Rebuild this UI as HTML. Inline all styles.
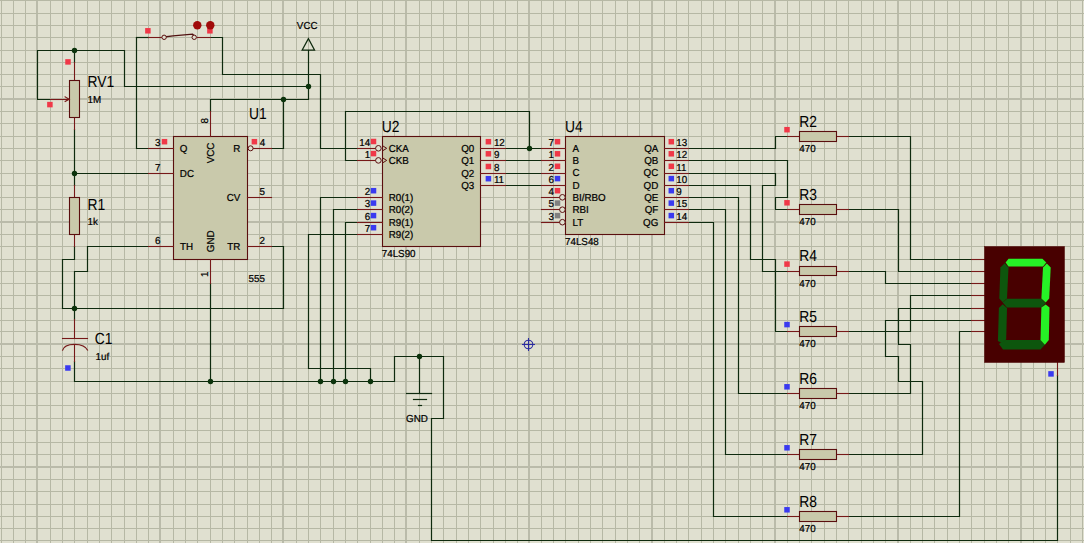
<!DOCTYPE html>
<html><head><meta charset="utf-8"><style>
html,body{margin:0;padding:0;background:#e0e0d0;overflow:hidden}
svg{display:block}
text{font-family:"Liberation Sans",sans-serif;fill:#000000;text-rendering:geometricPrecision;stroke:#000000;stroke-width:0.22px}
text.big{stroke-width:0.05px}
</style></head><body>
<svg width="1084" height="543" viewBox="0 0 1084 543">
<rect width="1084" height="543" fill="#e0e0d0"/>
<rect x="1" y="0" width="1" height="543" fill="#b6b8a5"/>
<rect x="13" y="0" width="1" height="543" fill="#b6b8a5"/>
<rect x="25" y="0" width="1" height="543" fill="#b6b8a5"/>
<rect x="50" y="0" width="1" height="543" fill="#b6b8a5"/>
<rect x="62" y="0" width="1" height="543" fill="#b6b8a5"/>
<rect x="74" y="0" width="1" height="543" fill="#b6b8a5"/>
<rect x="87" y="0" width="1" height="543" fill="#b6b8a5"/>
<rect x="99" y="0" width="1" height="543" fill="#b6b8a5"/>
<rect x="111" y="0" width="1" height="543" fill="#b6b8a5"/>
<rect x="124" y="0" width="1" height="543" fill="#b6b8a5"/>
<rect x="136" y="0" width="1" height="543" fill="#b6b8a5"/>
<rect x="148" y="0" width="1" height="543" fill="#b6b8a5"/>
<rect x="173" y="0" width="1" height="543" fill="#b6b8a5"/>
<rect x="185" y="0" width="1" height="543" fill="#b6b8a5"/>
<rect x="197" y="0" width="1" height="543" fill="#b6b8a5"/>
<rect x="210" y="0" width="1" height="543" fill="#b6b8a5"/>
<rect x="222" y="0" width="1" height="543" fill="#b6b8a5"/>
<rect x="234" y="0" width="1" height="543" fill="#b6b8a5"/>
<rect x="247" y="0" width="1" height="543" fill="#b6b8a5"/>
<rect x="259" y="0" width="1" height="543" fill="#b6b8a5"/>
<rect x="271" y="0" width="1" height="543" fill="#b6b8a5"/>
<rect x="296" y="0" width="1" height="543" fill="#b6b8a5"/>
<rect x="308" y="0" width="1" height="543" fill="#b6b8a5"/>
<rect x="320" y="0" width="1" height="543" fill="#b6b8a5"/>
<rect x="333" y="0" width="1" height="543" fill="#b6b8a5"/>
<rect x="345" y="0" width="1" height="543" fill="#b6b8a5"/>
<rect x="357" y="0" width="1" height="543" fill="#b6b8a5"/>
<rect x="370" y="0" width="1" height="543" fill="#b6b8a5"/>
<rect x="382" y="0" width="1" height="543" fill="#b6b8a5"/>
<rect x="394" y="0" width="1" height="543" fill="#b6b8a5"/>
<rect x="419" y="0" width="1" height="543" fill="#b6b8a5"/>
<rect x="431" y="0" width="1" height="543" fill="#b6b8a5"/>
<rect x="443" y="0" width="1" height="543" fill="#b6b8a5"/>
<rect x="456" y="0" width="1" height="543" fill="#b6b8a5"/>
<rect x="468" y="0" width="1" height="543" fill="#b6b8a5"/>
<rect x="480" y="0" width="1" height="543" fill="#b6b8a5"/>
<rect x="493" y="0" width="1" height="543" fill="#b6b8a5"/>
<rect x="505" y="0" width="1" height="543" fill="#b6b8a5"/>
<rect x="517" y="0" width="1" height="543" fill="#b6b8a5"/>
<rect x="541" y="0" width="1" height="543" fill="#b6b8a5"/>
<rect x="553" y="0" width="1" height="543" fill="#b6b8a5"/>
<rect x="565" y="0" width="1" height="543" fill="#b6b8a5"/>
<rect x="578" y="0" width="1" height="543" fill="#b6b8a5"/>
<rect x="590" y="0" width="1" height="543" fill="#b6b8a5"/>
<rect x="602" y="0" width="1" height="543" fill="#b6b8a5"/>
<rect x="615" y="0" width="1" height="543" fill="#b6b8a5"/>
<rect x="627" y="0" width="1" height="543" fill="#b6b8a5"/>
<rect x="639" y="0" width="1" height="543" fill="#b6b8a5"/>
<rect x="664" y="0" width="1" height="543" fill="#b6b8a5"/>
<rect x="676" y="0" width="1" height="543" fill="#b6b8a5"/>
<rect x="688" y="0" width="1" height="543" fill="#b6b8a5"/>
<rect x="701" y="0" width="1" height="543" fill="#b6b8a5"/>
<rect x="713" y="0" width="1" height="543" fill="#b6b8a5"/>
<rect x="725" y="0" width="1" height="543" fill="#b6b8a5"/>
<rect x="738" y="0" width="1" height="543" fill="#b6b8a5"/>
<rect x="750" y="0" width="1" height="543" fill="#b6b8a5"/>
<rect x="762" y="0" width="1" height="543" fill="#b6b8a5"/>
<rect x="787" y="0" width="1" height="543" fill="#b6b8a5"/>
<rect x="799" y="0" width="1" height="543" fill="#b6b8a5"/>
<rect x="811" y="0" width="1" height="543" fill="#b6b8a5"/>
<rect x="824" y="0" width="1" height="543" fill="#b6b8a5"/>
<rect x="836" y="0" width="1" height="543" fill="#b6b8a5"/>
<rect x="848" y="0" width="1" height="543" fill="#b6b8a5"/>
<rect x="861" y="0" width="1" height="543" fill="#b6b8a5"/>
<rect x="873" y="0" width="1" height="543" fill="#b6b8a5"/>
<rect x="885" y="0" width="1" height="543" fill="#b6b8a5"/>
<rect x="910" y="0" width="1" height="543" fill="#b6b8a5"/>
<rect x="922" y="0" width="1" height="543" fill="#b6b8a5"/>
<rect x="934" y="0" width="1" height="543" fill="#b6b8a5"/>
<rect x="947" y="0" width="1" height="543" fill="#b6b8a5"/>
<rect x="959" y="0" width="1" height="543" fill="#b6b8a5"/>
<rect x="971" y="0" width="1" height="543" fill="#b6b8a5"/>
<rect x="984" y="0" width="1" height="543" fill="#b6b8a5"/>
<rect x="996" y="0" width="1" height="543" fill="#b6b8a5"/>
<rect x="1008" y="0" width="1" height="543" fill="#b6b8a5"/>
<rect x="1033" y="0" width="1" height="543" fill="#b6b8a5"/>
<rect x="1045" y="0" width="1" height="543" fill="#b6b8a5"/>
<rect x="1057" y="0" width="1" height="543" fill="#b6b8a5"/>
<rect x="1070" y="0" width="1" height="543" fill="#b6b8a5"/>
<rect x="1082" y="0" width="1" height="543" fill="#b6b8a5"/>
<rect x="36" y="0" width="2" height="543" fill="#babbaa"/>
<rect x="159" y="0" width="2" height="543" fill="#babbaa"/>
<rect x="282" y="0" width="2" height="543" fill="#babbaa"/>
<rect x="405" y="0" width="2" height="543" fill="#babbaa"/>
<rect x="528" y="0" width="2" height="543" fill="#babbaa"/>
<rect x="651" y="0" width="2" height="543" fill="#babbaa"/>
<rect x="774" y="0" width="2" height="543" fill="#babbaa"/>
<rect x="897" y="0" width="2" height="543" fill="#babbaa"/>
<rect x="1020" y="0" width="2" height="543" fill="#babbaa"/>
<rect x="0" y="0" width="1084" height="1" fill="#b6b8a5"/>
<rect x="0" y="13" width="1084" height="1" fill="#b6b8a5"/>
<rect x="0" y="25" width="1084" height="1" fill="#b6b8a5"/>
<rect x="0" y="37" width="1084" height="1" fill="#b6b8a5"/>
<rect x="0" y="50" width="1084" height="1" fill="#b6b8a5"/>
<rect x="0" y="62" width="1084" height="1" fill="#b6b8a5"/>
<rect x="0" y="74" width="1084" height="1" fill="#b6b8a5"/>
<rect x="0" y="86" width="1084" height="1" fill="#b6b8a5"/>
<rect x="0" y="111" width="1084" height="1" fill="#b6b8a5"/>
<rect x="0" y="123" width="1084" height="1" fill="#b6b8a5"/>
<rect x="0" y="136" width="1084" height="1" fill="#b6b8a5"/>
<rect x="0" y="148" width="1084" height="1" fill="#b6b8a5"/>
<rect x="0" y="160" width="1084" height="1" fill="#b6b8a5"/>
<rect x="0" y="173" width="1084" height="1" fill="#b6b8a5"/>
<rect x="0" y="185" width="1084" height="1" fill="#b6b8a5"/>
<rect x="0" y="197" width="1084" height="1" fill="#b6b8a5"/>
<rect x="0" y="209" width="1084" height="1" fill="#b6b8a5"/>
<rect x="0" y="234" width="1084" height="1" fill="#b6b8a5"/>
<rect x="0" y="246" width="1084" height="1" fill="#b6b8a5"/>
<rect x="0" y="259" width="1084" height="1" fill="#b6b8a5"/>
<rect x="0" y="271" width="1084" height="1" fill="#b6b8a5"/>
<rect x="0" y="283" width="1084" height="1" fill="#b6b8a5"/>
<rect x="0" y="295" width="1084" height="1" fill="#b6b8a5"/>
<rect x="0" y="308" width="1084" height="1" fill="#b6b8a5"/>
<rect x="0" y="320" width="1084" height="1" fill="#b6b8a5"/>
<rect x="0" y="331" width="1084" height="1" fill="#b6b8a5"/>
<rect x="0" y="356" width="1084" height="1" fill="#b6b8a5"/>
<rect x="0" y="368" width="1084" height="1" fill="#b6b8a5"/>
<rect x="0" y="381" width="1084" height="1" fill="#b6b8a5"/>
<rect x="0" y="393" width="1084" height="1" fill="#b6b8a5"/>
<rect x="0" y="405" width="1084" height="1" fill="#b6b8a5"/>
<rect x="0" y="418" width="1084" height="1" fill="#b6b8a5"/>
<rect x="0" y="430" width="1084" height="1" fill="#b6b8a5"/>
<rect x="0" y="442" width="1084" height="1" fill="#b6b8a5"/>
<rect x="0" y="454" width="1084" height="1" fill="#b6b8a5"/>
<rect x="0" y="479" width="1084" height="1" fill="#b6b8a5"/>
<rect x="0" y="491" width="1084" height="1" fill="#b6b8a5"/>
<rect x="0" y="504" width="1084" height="1" fill="#b6b8a5"/>
<rect x="0" y="516" width="1084" height="1" fill="#b6b8a5"/>
<rect x="0" y="528" width="1084" height="1" fill="#b6b8a5"/>
<rect x="0" y="540" width="1084" height="1" fill="#b6b8a5"/>
<rect x="0" y="98" width="1084" height="2" fill="#babbaa"/>
<rect x="0" y="221" width="1084" height="2" fill="#babbaa"/>
<rect x="0" y="343" width="1084" height="2" fill="#babbaa"/>
<rect x="0" y="466" width="1084" height="2" fill="#babbaa"/>
<polyline points="136.5,37.5 148.5,37.5" fill="none" stroke="#0e2a0e" stroke-width="1.2" stroke-linejoin="miter" stroke-linecap="square"/>
<polyline points="136.5,37.5 136.5,148.5 148.5,148.5" fill="none" stroke="#0e2a0e" stroke-width="1.2" stroke-linejoin="miter" stroke-linecap="square"/>
<polyline points="210.5,37.5 222.5,37.5 222.5,74.5 320.5,74.5 320.5,148.5 357.5,148.5" fill="none" stroke="#0e2a0e" stroke-width="1.2" stroke-linejoin="miter" stroke-linecap="square"/>
<polyline points="37.5,50.5 124.5,50.5 124.5,86.5 308.5,86.5" fill="none" stroke="#0e2a0e" stroke-width="1.2" stroke-linejoin="miter" stroke-linecap="square"/>
<polyline points="37.5,50.5 37.5,99.5 50.5,99.5" fill="none" stroke="#0e2a0e" stroke-width="1.2" stroke-linejoin="miter" stroke-linecap="square"/>
<polyline points="74.5,50.5 74.5,62.5" fill="none" stroke="#0e2a0e" stroke-width="1.2" stroke-linejoin="miter" stroke-linecap="square"/>
<polyline points="308.5,50.5 308.5,99.5 210.5,99.5 210.5,111.5" fill="none" stroke="#0e2a0e" stroke-width="1.2" stroke-linejoin="miter" stroke-linecap="square"/>
<polyline points="283.5,99.5 283.5,148.5 271.5,148.5" fill="none" stroke="#0e2a0e" stroke-width="1.2" stroke-linejoin="miter" stroke-linecap="square"/>
<polyline points="74.5,129.5 74.5,185.5" fill="none" stroke="#0e2a0e" stroke-width="1.2" stroke-linejoin="miter" stroke-linecap="square"/>
<polyline points="74.5,173.5 148.5,173.5" fill="none" stroke="#0e2a0e" stroke-width="1.2" stroke-linejoin="miter" stroke-linecap="square"/>
<polyline points="74.5,246.5 74.5,259.5 62.5,259.5 62.5,308.5 283.5,308.5 283.5,246.5 271.5,246.5" fill="none" stroke="#0e2a0e" stroke-width="1.2" stroke-linejoin="miter" stroke-linecap="square"/>
<polyline points="148.5,246.5 87.5,246.5 87.5,271.5 74.5,271.5 74.5,319.5" fill="none" stroke="#0e2a0e" stroke-width="1.2" stroke-linejoin="miter" stroke-linecap="square"/>
<polyline points="74.5,361.5 74.5,381.5 394.5,381.5 394.5,356.5 443.5,356.5 443.5,418.5 431.5,418.5 431.5,540.5 1057.5,540.5 1057.5,375.5" fill="none" stroke="#0e2a0e" stroke-width="1.2" stroke-linejoin="miter" stroke-linecap="square"/>
<polyline points="210.5,283.5 210.5,381.5" fill="none" stroke="#0e2a0e" stroke-width="1.2" stroke-linejoin="miter" stroke-linecap="square"/>
<polyline points="357.5,160.5 345.5,160.5 345.5,111.5 529.5,111.5 529.5,148.5" fill="none" stroke="#0e2a0e" stroke-width="1.2" stroke-linejoin="miter" stroke-linecap="square"/>
<polyline points="505.5,148.5 541.5,148.5" fill="none" stroke="#0e2a0e" stroke-width="1.2" stroke-linejoin="miter" stroke-linecap="square"/>
<polyline points="505.5,160.5 541.5,160.5" fill="none" stroke="#0e2a0e" stroke-width="1.2" stroke-linejoin="miter" stroke-linecap="square"/>
<polyline points="505.5,173.5 541.5,173.5" fill="none" stroke="#0e2a0e" stroke-width="1.2" stroke-linejoin="miter" stroke-linecap="square"/>
<polyline points="505.5,185.5 541.5,185.5" fill="none" stroke="#0e2a0e" stroke-width="1.2" stroke-linejoin="miter" stroke-linecap="square"/>
<polyline points="357.5,197.5 320.5,197.5 320.5,381.5" fill="none" stroke="#0e2a0e" stroke-width="1.2" stroke-linejoin="miter" stroke-linecap="square"/>
<polyline points="357.5,209.5 333.5,209.5 333.5,381.5" fill="none" stroke="#0e2a0e" stroke-width="1.2" stroke-linejoin="miter" stroke-linecap="square"/>
<polyline points="357.5,222.5 345.5,222.5 345.5,381.5" fill="none" stroke="#0e2a0e" stroke-width="1.2" stroke-linejoin="miter" stroke-linecap="square"/>
<polyline points="357.5,234.5 308.5,234.5 308.5,368.5 370.5,368.5 370.5,381.5" fill="none" stroke="#0e2a0e" stroke-width="1.2" stroke-linejoin="miter" stroke-linecap="square"/>
<polyline points="419.5,356.5 419.5,393.5" fill="none" stroke="#0e2a0e" stroke-width="1.2" stroke-linejoin="miter" stroke-linecap="square"/>
<polyline points="406.5,393.5 431.5,393.5" fill="none" stroke="#0e2a0e" stroke-width="1.2" stroke-linejoin="miter" stroke-linecap="square"/>
<polyline points="413.5,399.5 426.5,399.5" fill="none" stroke="#0e2a0e" stroke-width="1.2" stroke-linejoin="miter" stroke-linecap="square"/>
<polyline points="418.5,405.5 421.5,405.5" fill="none" stroke="#0e2a0e" stroke-width="1.2" stroke-linejoin="miter" stroke-linecap="square"/>
<polyline points="688.5,148.5 775.5,148.5 775.5,136.5 787.5,136.5" fill="none" stroke="#0e2a0e" stroke-width="1.2" stroke-linejoin="miter" stroke-linecap="square"/>
<polyline points="688.5,160.5 787.5,160.5 787.5,197.5 775.5,197.5 775.5,209.5 787.5,209.5" fill="none" stroke="#0e2a0e" stroke-width="1.2" stroke-linejoin="miter" stroke-linecap="square"/>
<polyline points="688.5,173.5 775.5,173.5 775.5,185.5 762.5,185.5 762.5,271.5 787.5,271.5" fill="none" stroke="#0e2a0e" stroke-width="1.2" stroke-linejoin="miter" stroke-linecap="square"/>
<polyline points="688.5,185.5 750.5,185.5 750.5,259.5 775.5,259.5 775.5,331.5 787.5,331.5" fill="none" stroke="#0e2a0e" stroke-width="1.2" stroke-linejoin="miter" stroke-linecap="square"/>
<polyline points="688.5,197.5 738.5,197.5 738.5,393.5 787.5,393.5" fill="none" stroke="#0e2a0e" stroke-width="1.2" stroke-linejoin="miter" stroke-linecap="square"/>
<polyline points="688.5,209.5 725.5,209.5 725.5,454.5 787.5,454.5" fill="none" stroke="#0e2a0e" stroke-width="1.2" stroke-linejoin="miter" stroke-linecap="square"/>
<polyline points="688.5,222.5 713.5,222.5 713.5,516.5 787.5,516.5" fill="none" stroke="#0e2a0e" stroke-width="1.2" stroke-linejoin="miter" stroke-linecap="square"/>
<polyline points="848.5,136.5 910.5,136.5 910.5,259.5 971.5,259.5" fill="none" stroke="#0e2a0e" stroke-width="1.2" stroke-linejoin="miter" stroke-linecap="square"/>
<polyline points="848.5,209.5 898.5,209.5 898.5,271.5 971.5,271.5" fill="none" stroke="#0e2a0e" stroke-width="1.2" stroke-linejoin="miter" stroke-linecap="square"/>
<polyline points="848.5,271.5 885.5,271.5 885.5,283.5 971.5,283.5" fill="none" stroke="#0e2a0e" stroke-width="1.2" stroke-linejoin="miter" stroke-linecap="square"/>
<polyline points="848.5,331.5 910.5,331.5 910.5,295.5 971.5,295.5" fill="none" stroke="#0e2a0e" stroke-width="1.2" stroke-linejoin="miter" stroke-linecap="square"/>
<polyline points="971.5,308.5 898.5,308.5 898.5,344.5 910.5,344.5 910.5,393.5 848.5,393.5" fill="none" stroke="#0e2a0e" stroke-width="1.2" stroke-linejoin="miter" stroke-linecap="square"/>
<polyline points="971.5,320.5 885.5,320.5 885.5,356.5 898.5,356.5 898.5,381.5 922.5,381.5 922.5,454.5 848.5,454.5" fill="none" stroke="#0e2a0e" stroke-width="1.2" stroke-linejoin="miter" stroke-linecap="square"/>
<polyline points="971.5,331.5 959.5,331.5 959.5,516.5 848.5,516.5" fill="none" stroke="#0e2a0e" stroke-width="1.2" stroke-linejoin="miter" stroke-linecap="square"/>
<circle cx="320.5" cy="381.5" r="2.7" fill="#0c330c"/>
<circle cx="333.5" cy="381.5" r="2.7" fill="#0c330c"/>
<circle cx="345.5" cy="381.5" r="2.7" fill="#0c330c"/>
<circle cx="370.5" cy="381.5" r="2.7" fill="#0c330c"/>
<circle cx="210.5" cy="381.5" r="2.7" fill="#0c330c"/>
<circle cx="419.5" cy="356.5" r="2.7" fill="#0c330c"/>
<circle cx="74.5" cy="308.5" r="2.7" fill="#0c330c"/>
<circle cx="74.5" cy="173.5" r="2.7" fill="#0c330c"/>
<circle cx="74.5" cy="50.5" r="2.7" fill="#0c330c"/>
<circle cx="308.5" cy="86.5" r="2.7" fill="#0c330c"/>
<circle cx="283.5" cy="99.5" r="2.7" fill="#0c330c"/>
<circle cx="529.5" cy="148.5" r="2.7" fill="#0c330c"/>
<polyline points="148.5,37.5 161.5,37.5" fill="none" stroke="#761818" stroke-width="1.1" stroke-linejoin="miter" stroke-linecap="square"/>
<polyline points="197.5,37.5 210.5,37.5" fill="none" stroke="#761818" stroke-width="1.1" stroke-linejoin="miter" stroke-linecap="square"/>
<polyline points="166.4,36.7 173,35.9 192.6,34.2 193.6,35.3" fill="none" stroke="#501010" stroke-width="1.3" stroke-linejoin="miter" stroke-linecap="square"/>
<circle cx="164.1" cy="37.3" r="2.2" fill="#e0e0d0" stroke="#5a0e0e" stroke-width="1"/>
<circle cx="194.2" cy="37.3" r="2.2" fill="#e0e0d0" stroke="#5a0e0e" stroke-width="1"/>
<rect x="145.15" y="28.05" width="5.5" height="5.5" fill="#f03848"/>
<rect x="207.15" y="28.05" width="5.5" height="5.5" fill="#f03848"/>
<circle cx="197.3" cy="25.3" r="4.2" fill="#a00a0a"/>
<circle cx="210.3" cy="25.3" r="4.2" fill="#a00a0a"/>
<polygon points="308.4,38.6 302.1,50.2 314.6,50.2" fill="none" stroke="#0e2a0e" stroke-width="1.2"/>
<text transform="translate(307.2 26.7) scale(1 1.03)" font-size="9.8" text-anchor="middle" dominant-baseline="central">VCC</text>
<polyline points="74.5,62.5 74.5,80.5" fill="none" stroke="#761818" stroke-width="1.1" stroke-linejoin="miter" stroke-linecap="square"/>
<polyline points="74.5,117.5 74.5,129.5" fill="none" stroke="#761818" stroke-width="1.1" stroke-linejoin="miter" stroke-linecap="square"/>
<rect x="69.5" y="80.5" width="10.00" height="37.00" fill="#c9c9ab" stroke="#5a0e0e" stroke-width="1.1"/>
<polyline points="50.5,99.5 69.5,99.5" fill="none" stroke="#761818" stroke-width="1.1" stroke-linejoin="miter" stroke-linecap="square"/>
<polyline points="65.2,96.9 69.1,99.2 65.2,101.5" fill="none" stroke="#761818" stroke-width="1.2" stroke-linejoin="miter" stroke-linecap="square"/>
<rect x="65.25" y="59.15" width="5.5" height="5.5" fill="#f03848"/>
<rect x="47.15" y="101.85" width="5.5" height="5.5" fill="#f03848"/>
<text class="big" transform="translate(87.6 86.5) scale(0.96 1.12)" font-size="14.4" text-anchor="start" dominant-baseline="alphabetic">RV1</text>
<text transform="translate(87.6 100.2) scale(1 1.03)" font-size="9.8" text-anchor="start" dominant-baseline="central">1M</text>
<polyline points="74.5,185.5 74.5,197.5" fill="none" stroke="#761818" stroke-width="1.1" stroke-linejoin="miter" stroke-linecap="square"/>
<polyline points="74.5,234.5 74.5,246.5" fill="none" stroke="#761818" stroke-width="1.1" stroke-linejoin="miter" stroke-linecap="square"/>
<rect x="69.5" y="197.5" width="10.00" height="37.00" fill="#c9c9ab" stroke="#5a0e0e" stroke-width="1.1"/>
<text class="big" transform="translate(87.5 209.75) scale(0.96 1.12)" font-size="14.4" text-anchor="start" dominant-baseline="alphabetic">R1</text>
<text transform="translate(87.5 222.75) scale(1 1.03)" font-size="9.8" text-anchor="start" dominant-baseline="central">1k</text>
<polyline points="74.5,319.5 74.5,338.5" fill="none" stroke="#761818" stroke-width="1.1" stroke-linejoin="miter" stroke-linecap="square"/>
<polyline points="74.5,344.5 74.5,361.5" fill="none" stroke="#761818" stroke-width="1.1" stroke-linejoin="miter" stroke-linecap="square"/>
<polyline points="62.5,338.5 87.5,338.5" fill="none" stroke="#761818" stroke-width="1.1" stroke-linejoin="miter" stroke-linecap="square"/>
<path d="M62.4,350.6 Q64,344.4 74.5,344.4 Q85,344.4 87.8,350.6" fill="none" stroke="#761818" stroke-width="1.2"/>
<rect x="65.15" y="365.25" width="5.5" height="5.5" fill="#3a3af0"/>
<text class="big" transform="translate(94.8 344) scale(0.96 1.12)" font-size="14.4" text-anchor="start" dominant-baseline="alphabetic">C1</text>
<text transform="translate(95.6 357.0) scale(1 1.03)" font-size="9.8" text-anchor="start" dominant-baseline="central">1uf</text>
<rect x="173.5" y="136.5" width="74.00" height="123.00" fill="#c9c9ab" stroke="#5a0e0e" stroke-width="1.1"/>
<polyline points="148.5,148.5 173.5,148.5" fill="none" stroke="#761818" stroke-width="1.1" stroke-linejoin="miter" stroke-linecap="square"/>
<text transform="translate(160.5 143.5) scale(1 1.03)" font-size="9.8" text-anchor="end" dominant-baseline="central">3</text>
<rect x="161.75" y="138.95" width="5.5" height="5.5" fill="#f03848"/>
<polyline points="148.5,173.5 173.5,173.5" fill="none" stroke="#761818" stroke-width="1.1" stroke-linejoin="miter" stroke-linecap="square"/>
<text transform="translate(160.5 168.0) scale(1 1.03)" font-size="9.8" text-anchor="end" dominant-baseline="central">7</text>
<polyline points="148.5,246.5 173.5,246.5" fill="none" stroke="#761818" stroke-width="1.1" stroke-linejoin="miter" stroke-linecap="square"/>
<text transform="translate(160.5 241.2) scale(1 1.03)" font-size="9.8" text-anchor="end" dominant-baseline="central">6</text>
<circle cx="250.6" cy="148.3" r="2.5" fill="#e0e0d0" stroke="#5a0e0e" stroke-width="1"/>
<polyline points="253.5,148.5 271.5,148.5" fill="none" stroke="#761818" stroke-width="1.1" stroke-linejoin="miter" stroke-linecap="square"/>
<text transform="translate(259.8 143.5) scale(1 1.03)" font-size="9.8" text-anchor="start" dominant-baseline="central">4</text>
<rect x="251.65" y="138.95" width="5.5" height="5.5" fill="#f03848"/>
<polyline points="247.5,197.5 271.5,197.5" fill="none" stroke="#761818" stroke-width="1.1" stroke-linejoin="miter" stroke-linecap="square"/>
<text transform="translate(259.6 192.6) scale(1 1.03)" font-size="9.8" text-anchor="start" dominant-baseline="central">5</text>
<polyline points="247.5,246.5 271.5,246.5" fill="none" stroke="#761818" stroke-width="1.1" stroke-linejoin="miter" stroke-linecap="square"/>
<text transform="translate(259.6 241.2) scale(1 1.03)" font-size="9.8" text-anchor="start" dominant-baseline="central">2</text>
<polyline points="210.5,136.5 210.5,111.5" fill="none" stroke="#761818" stroke-width="1.1" stroke-linejoin="miter" stroke-linecap="square"/>
<text transform="translate(205.6 120.7) rotate(-90) scale(1 1.03)" font-size="9.8" text-anchor="middle" dominant-baseline="central">8</text>
<polyline points="210.5,259.5 210.5,283.5" fill="none" stroke="#761818" stroke-width="1.1" stroke-linejoin="miter" stroke-linecap="square"/>
<text transform="translate(205.1 274.3) rotate(-90) scale(1 1.03)" font-size="9.8" text-anchor="middle" dominant-baseline="central">1</text>
<text transform="translate(179.8 149.3) scale(1 1.03)" font-size="9.8" text-anchor="start" dominant-baseline="central">Q</text>
<text transform="translate(179.8 174.4) scale(1 1.03)" font-size="9.8" text-anchor="start" dominant-baseline="central">DC</text>
<text transform="translate(180 247.3) scale(1 1.03)" font-size="9.8" text-anchor="start" dominant-baseline="central">TH</text>
<text transform="translate(240.3 149.3) scale(1 1.03)" font-size="9.8" text-anchor="end" dominant-baseline="central">R</text>
<text transform="translate(240.3 198.2) scale(1 1.03)" font-size="9.8" text-anchor="end" dominant-baseline="central">CV</text>
<text transform="translate(240.3 247.3) scale(1 1.03)" font-size="9.8" text-anchor="end" dominant-baseline="central">TR</text>
<text transform="translate(211.6 153) rotate(-90) scale(1 1.03)" font-size="9.8" text-anchor="middle" dominant-baseline="central">VCC</text>
<text transform="translate(211.1 241.3) rotate(-90) scale(1 1.03)" font-size="9.8" text-anchor="middle" dominant-baseline="central">GND</text>
<text class="big" transform="translate(249.1 119) scale(0.96 1.12)" font-size="14.4" text-anchor="start" dominant-baseline="alphabetic">U1</text>
<text transform="translate(248.5 279.7) scale(1 1.03)" font-size="9.8" text-anchor="start" dominant-baseline="central">555</text>
<rect x="382.5" y="136.5" width="98.00" height="110.00" fill="#c9c9ab" stroke="#5a0e0e" stroke-width="1.1"/>
<polyline points="357.5,148.5 375.5,148.5" fill="none" stroke="#761818" stroke-width="1.1" stroke-linejoin="miter" stroke-linecap="square"/>
<circle cx="378.4" cy="148.3" r="2.8" fill="#e0e0d0" stroke="#5a0e0e" stroke-width="1"/>
<polyline points="382.5,145.70000000000002 386.7,148.3 382.5,150.9" fill="none" stroke="#5a0e0e" stroke-width="1" stroke-linejoin="miter" stroke-linecap="square"/>
<text transform="translate(370.1 143.5) scale(1 1.03)" font-size="9.8" text-anchor="end" dominant-baseline="central">14</text>
<rect x="370.75" y="138.75" width="5.5" height="5.5" fill="#f03848"/>
<text transform="translate(388.7 149.3) scale(1 1.03)" font-size="9.8" text-anchor="start" dominant-baseline="central">CKA</text>
<polyline points="357.5,160.5 375.5,160.5" fill="none" stroke="#761818" stroke-width="1.1" stroke-linejoin="miter" stroke-linecap="square"/>
<circle cx="378.4" cy="160.4" r="2.8" fill="#e0e0d0" stroke="#5a0e0e" stroke-width="1"/>
<polyline points="382.5,157.8 386.7,160.4 382.5,163.0" fill="none" stroke="#5a0e0e" stroke-width="1" stroke-linejoin="miter" stroke-linecap="square"/>
<text transform="translate(370.1 155.6) scale(1 1.03)" font-size="9.8" text-anchor="end" dominant-baseline="central">1</text>
<rect x="370.75" y="150.85" width="5.5" height="5.5" fill="#f03848"/>
<text transform="translate(388.7 161.4) scale(1 1.03)" font-size="9.8" text-anchor="start" dominant-baseline="central">CKB</text>
<polyline points="357.5,197.5 382.5,197.5" fill="none" stroke="#761818" stroke-width="1.1" stroke-linejoin="miter" stroke-linecap="square"/>
<text transform="translate(370.1 192.5) scale(1 1.03)" font-size="9.8" text-anchor="end" dominant-baseline="central">2</text>
<rect x="370.75" y="187.95" width="5.5" height="5.5" fill="#3a3af0"/>
<text transform="translate(388.7 198.3) scale(1 1.03)" font-size="9.8" text-anchor="start" dominant-baseline="central">R0(1)</text>
<polyline points="357.5,209.5 382.5,209.5" fill="none" stroke="#761818" stroke-width="1.1" stroke-linejoin="miter" stroke-linecap="square"/>
<text transform="translate(370.1 204.89999999999998) scale(1 1.03)" font-size="9.8" text-anchor="end" dominant-baseline="central">3</text>
<rect x="370.75" y="200.35" width="5.5" height="5.5" fill="#3a3af0"/>
<text transform="translate(388.7 210.7) scale(1 1.03)" font-size="9.8" text-anchor="start" dominant-baseline="central">R0(2)</text>
<polyline points="357.5,222.5 382.5,222.5" fill="none" stroke="#761818" stroke-width="1.1" stroke-linejoin="miter" stroke-linecap="square"/>
<text transform="translate(370.1 217.39999999999998) scale(1 1.03)" font-size="9.8" text-anchor="end" dominant-baseline="central">6</text>
<rect x="370.75" y="212.85" width="5.5" height="5.5" fill="#3a3af0"/>
<text transform="translate(388.7 223.2) scale(1 1.03)" font-size="9.8" text-anchor="start" dominant-baseline="central">R9(1)</text>
<polyline points="357.5,234.5 382.5,234.5" fill="none" stroke="#761818" stroke-width="1.1" stroke-linejoin="miter" stroke-linecap="square"/>
<text transform="translate(370.1 229.5) scale(1 1.03)" font-size="9.8" text-anchor="end" dominant-baseline="central">7</text>
<rect x="370.75" y="224.95" width="5.5" height="5.5" fill="#3a3af0"/>
<text transform="translate(388.7 235.3) scale(1 1.03)" font-size="9.8" text-anchor="start" dominant-baseline="central">R9(2)</text>
<polyline points="480.5,148.5 505.5,148.5" fill="none" stroke="#761818" stroke-width="1.1" stroke-linejoin="miter" stroke-linecap="square"/>
<text transform="translate(474.3 149.3) scale(1 1.03)" font-size="9.8" text-anchor="end" dominant-baseline="central">Q0</text>
<text transform="translate(493.9 143.70000000000002) scale(1 1.03)" font-size="9.8" text-anchor="start" dominant-baseline="central">12</text>
<rect x="485.65" y="138.95" width="5.5" height="5.5" fill="#f03848"/>
<polyline points="480.5,160.5 505.5,160.5" fill="none" stroke="#761818" stroke-width="1.1" stroke-linejoin="miter" stroke-linecap="square"/>
<text transform="translate(474.3 161.4) scale(1 1.03)" font-size="9.8" text-anchor="end" dominant-baseline="central">Q1</text>
<text transform="translate(493.9 155.8) scale(1 1.03)" font-size="9.8" text-anchor="start" dominant-baseline="central">9</text>
<rect x="485.65" y="151.05" width="5.5" height="5.5" fill="#f03848"/>
<polyline points="480.5,173.5 505.5,173.5" fill="none" stroke="#761818" stroke-width="1.1" stroke-linejoin="miter" stroke-linecap="square"/>
<text transform="translate(474.3 174.1) scale(1 1.03)" font-size="9.8" text-anchor="end" dominant-baseline="central">Q2</text>
<text transform="translate(493.9 168.5) scale(1 1.03)" font-size="9.8" text-anchor="start" dominant-baseline="central">8</text>
<rect x="485.65" y="163.75" width="5.5" height="5.5" fill="#f03848"/>
<polyline points="480.5,185.5 505.5,185.5" fill="none" stroke="#761818" stroke-width="1.1" stroke-linejoin="miter" stroke-linecap="square"/>
<text transform="translate(474.3 186.3) scale(1 1.03)" font-size="9.8" text-anchor="end" dominant-baseline="central">Q3</text>
<text transform="translate(493.9 180.70000000000002) scale(1 1.03)" font-size="9.8" text-anchor="start" dominant-baseline="central">11</text>
<rect x="485.65" y="175.95" width="5.5" height="5.5" fill="#3a3af0"/>
<text class="big" transform="translate(381.75 131.75) scale(0.96 1.12)" font-size="14.4" text-anchor="start" dominant-baseline="alphabetic">U2</text>
<text transform="translate(381.75 254.5) scale(1 1.03)" font-size="9.8" text-anchor="start" dominant-baseline="central">74LS90</text>
<rect x="565.5" y="136.5" width="99.00" height="98.00" fill="#c9c9ab" stroke="#5a0e0e" stroke-width="1.1"/>
<polyline points="541.5,148.5 565.5,148.5" fill="none" stroke="#761818" stroke-width="1.1" stroke-linejoin="miter" stroke-linecap="square"/>
<text transform="translate(554 143.5) scale(1 1.03)" font-size="9.8" text-anchor="end" dominant-baseline="central">7</text>
<rect x="554.75" y="138.95" width="5.5" height="5.5" fill="#f03848"/>
<text transform="translate(572.5 149.3) scale(1 1.03)" font-size="9.8" text-anchor="start" dominant-baseline="central">A</text>
<polyline points="541.5,160.5 565.5,160.5" fill="none" stroke="#761818" stroke-width="1.1" stroke-linejoin="miter" stroke-linecap="square"/>
<text transform="translate(554 155.6) scale(1 1.03)" font-size="9.8" text-anchor="end" dominant-baseline="central">1</text>
<rect x="554.75" y="151.05" width="5.5" height="5.5" fill="#f03848"/>
<text transform="translate(572.5 161.4) scale(1 1.03)" font-size="9.8" text-anchor="start" dominant-baseline="central">B</text>
<polyline points="541.5,173.5 565.5,173.5" fill="none" stroke="#761818" stroke-width="1.1" stroke-linejoin="miter" stroke-linecap="square"/>
<text transform="translate(554 168.1) scale(1 1.03)" font-size="9.8" text-anchor="end" dominant-baseline="central">2</text>
<rect x="554.75" y="163.55" width="5.5" height="5.5" fill="#f03848"/>
<text transform="translate(572.5 173.9) scale(1 1.03)" font-size="9.8" text-anchor="start" dominant-baseline="central">C</text>
<polyline points="541.5,185.5 565.5,185.5" fill="none" stroke="#761818" stroke-width="1.1" stroke-linejoin="miter" stroke-linecap="square"/>
<text transform="translate(554 180.39999999999998) scale(1 1.03)" font-size="9.8" text-anchor="end" dominant-baseline="central">6</text>
<rect x="554.75" y="175.85" width="5.5" height="5.5" fill="#3a3af0"/>
<text transform="translate(572.5 186.2) scale(1 1.03)" font-size="9.8" text-anchor="start" dominant-baseline="central">D</text>
<polyline points="541.5,197.5 559.5,197.5" fill="none" stroke="#761818" stroke-width="1.1" stroke-linejoin="miter" stroke-linecap="square"/>
<circle cx="562.4" cy="197.3" r="2.8" fill="#e0e0d0" stroke="#5a0e0e" stroke-width="1"/>
<text transform="translate(554 192.5) scale(1 1.03)" font-size="9.8" text-anchor="end" dominant-baseline="central">4</text>
<rect x="554.75" y="187.95" width="5.5" height="5.5" fill="#f03848"/>
<text transform="translate(572.5 198.3) scale(1 1.03)" font-size="9.8" text-anchor="start" dominant-baseline="central">BI/RBO</text>
<polyline points="541.5,209.5 559.5,209.5" fill="none" stroke="#761818" stroke-width="1.1" stroke-linejoin="miter" stroke-linecap="square"/>
<circle cx="562.4" cy="209.7" r="2.8" fill="#e0e0d0" stroke="#5a0e0e" stroke-width="1"/>
<text transform="translate(554 204.89999999999998) scale(1 1.03)" font-size="9.8" text-anchor="end" dominant-baseline="central">5</text>
<rect x="554.75" y="200.35" width="5.5" height="5.5" fill="#808080"/>
<text transform="translate(572.5 210.7) scale(1 1.03)" font-size="9.8" text-anchor="start" dominant-baseline="central">RBI</text>
<polyline points="541.5,222.5 559.5,222.5" fill="none" stroke="#761818" stroke-width="1.1" stroke-linejoin="miter" stroke-linecap="square"/>
<circle cx="562.4" cy="222.2" r="2.8" fill="#e0e0d0" stroke="#5a0e0e" stroke-width="1"/>
<text transform="translate(554 217.39999999999998) scale(1 1.03)" font-size="9.8" text-anchor="end" dominant-baseline="central">3</text>
<rect x="554.75" y="212.85" width="5.5" height="5.5" fill="#808080"/>
<text transform="translate(572.5 223.2) scale(1 1.03)" font-size="9.8" text-anchor="start" dominant-baseline="central">LT</text>
<polyline points="664.5,148.5 688.5,148.5" fill="none" stroke="#761818" stroke-width="1.1" stroke-linejoin="miter" stroke-linecap="square"/>
<text transform="translate(658.3 149.3) scale(1 1.03)" font-size="9.8" text-anchor="end" dominant-baseline="central">QA</text>
<text transform="translate(676.3 143.5) scale(1 1.03)" font-size="9.8" text-anchor="start" dominant-baseline="central">13</text>
<rect x="668.55" y="138.95" width="5.5" height="5.5" fill="#f03848"/>
<polyline points="664.5,160.5 688.5,160.5" fill="none" stroke="#761818" stroke-width="1.1" stroke-linejoin="miter" stroke-linecap="square"/>
<text transform="translate(658.3 161.4) scale(1 1.03)" font-size="9.8" text-anchor="end" dominant-baseline="central">QB</text>
<text transform="translate(676.3 155.6) scale(1 1.03)" font-size="9.8" text-anchor="start" dominant-baseline="central">12</text>
<rect x="668.55" y="151.05" width="5.5" height="5.5" fill="#f03848"/>
<polyline points="664.5,173.5 688.5,173.5" fill="none" stroke="#761818" stroke-width="1.1" stroke-linejoin="miter" stroke-linecap="square"/>
<text transform="translate(658.3 173.9) scale(1 1.03)" font-size="9.8" text-anchor="end" dominant-baseline="central">QC</text>
<text transform="translate(676.3 168.1) scale(1 1.03)" font-size="9.8" text-anchor="start" dominant-baseline="central">11</text>
<rect x="668.55" y="163.55" width="5.5" height="5.5" fill="#f03848"/>
<polyline points="664.5,185.5 688.5,185.5" fill="none" stroke="#761818" stroke-width="1.1" stroke-linejoin="miter" stroke-linecap="square"/>
<text transform="translate(658.3 186.2) scale(1 1.03)" font-size="9.8" text-anchor="end" dominant-baseline="central">QD</text>
<text transform="translate(676.3 180.39999999999998) scale(1 1.03)" font-size="9.8" text-anchor="start" dominant-baseline="central">10</text>
<rect x="668.55" y="175.85" width="5.5" height="5.5" fill="#3a3af0"/>
<polyline points="664.5,197.5 688.5,197.5" fill="none" stroke="#761818" stroke-width="1.1" stroke-linejoin="miter" stroke-linecap="square"/>
<text transform="translate(658.3 198.3) scale(1 1.03)" font-size="9.8" text-anchor="end" dominant-baseline="central">QE</text>
<text transform="translate(676.3 192.5) scale(1 1.03)" font-size="9.8" text-anchor="start" dominant-baseline="central">9</text>
<rect x="668.55" y="187.95" width="5.5" height="5.5" fill="#3a3af0"/>
<polyline points="664.5,209.5 688.5,209.5" fill="none" stroke="#761818" stroke-width="1.1" stroke-linejoin="miter" stroke-linecap="square"/>
<text transform="translate(658.3 210.7) scale(1 1.03)" font-size="9.8" text-anchor="end" dominant-baseline="central">QF</text>
<text transform="translate(676.3 204.89999999999998) scale(1 1.03)" font-size="9.8" text-anchor="start" dominant-baseline="central">15</text>
<rect x="668.55" y="200.35" width="5.5" height="5.5" fill="#3a3af0"/>
<polyline points="664.5,222.5 688.5,222.5" fill="none" stroke="#761818" stroke-width="1.1" stroke-linejoin="miter" stroke-linecap="square"/>
<text transform="translate(658.3 223.2) scale(1 1.03)" font-size="9.8" text-anchor="end" dominant-baseline="central">QG</text>
<text transform="translate(676.3 217.39999999999998) scale(1 1.03)" font-size="9.8" text-anchor="start" dominant-baseline="central">14</text>
<rect x="668.55" y="212.85" width="5.5" height="5.5" fill="#3a3af0"/>
<text class="big" transform="translate(565 131.75) scale(0.96 1.12)" font-size="14.4" text-anchor="start" dominant-baseline="alphabetic">U4</text>
<text transform="translate(565 242.5) scale(1 1.03)" font-size="9.8" text-anchor="start" dominant-baseline="central">74LS48</text>
<polyline points="787.5,136.5 799.5,136.5" fill="none" stroke="#761818" stroke-width="1.1" stroke-linejoin="miter" stroke-linecap="square"/>
<polyline points="836.5,136.5 848.5,136.5" fill="none" stroke="#761818" stroke-width="1.1" stroke-linejoin="miter" stroke-linecap="square"/>
<rect x="799.5" y="131.5" width="37.00" height="10.00" fill="#c9c9ab" stroke="#5a0e0e" stroke-width="1.1"/>
<rect x="784.25" y="126.95" width="5.5" height="5.5" fill="#f03848"/>
<text class="big" transform="translate(799.3 127.00000000000001) scale(0.96 1.12)" font-size="14.4" text-anchor="start" dominant-baseline="alphabetic">R2</text>
<text transform="translate(799.3 149.8) scale(1 1.03)" font-size="9.8" text-anchor="start" dominant-baseline="central">470</text>
<polyline points="787.5,209.5 799.5,209.5" fill="none" stroke="#761818" stroke-width="1.1" stroke-linejoin="miter" stroke-linecap="square"/>
<polyline points="836.5,209.5 848.5,209.5" fill="none" stroke="#761818" stroke-width="1.1" stroke-linejoin="miter" stroke-linecap="square"/>
<rect x="799.5" y="204.5" width="37.00" height="10.00" fill="#c9c9ab" stroke="#5a0e0e" stroke-width="1.1"/>
<rect x="784.25" y="200.05" width="5.5" height="5.5" fill="#f03848"/>
<text class="big" transform="translate(799.3 200.1) scale(0.96 1.12)" font-size="14.4" text-anchor="start" dominant-baseline="alphabetic">R3</text>
<text transform="translate(799.3 222.9) scale(1 1.03)" font-size="9.8" text-anchor="start" dominant-baseline="central">470</text>
<polyline points="787.5,271.5 799.5,271.5" fill="none" stroke="#761818" stroke-width="1.1" stroke-linejoin="miter" stroke-linecap="square"/>
<polyline points="836.5,271.5 848.5,271.5" fill="none" stroke="#761818" stroke-width="1.1" stroke-linejoin="miter" stroke-linecap="square"/>
<rect x="799.5" y="266.5" width="37.00" height="9.00" fill="#c9c9ab" stroke="#5a0e0e" stroke-width="1.1"/>
<rect x="784.25" y="261.35" width="5.5" height="5.5" fill="#f03848"/>
<text class="big" transform="translate(799.3 261.4) scale(0.96 1.12)" font-size="14.4" text-anchor="start" dominant-baseline="alphabetic">R4</text>
<text transform="translate(799.3 284.2) scale(1 1.03)" font-size="9.8" text-anchor="start" dominant-baseline="central">470</text>
<polyline points="787.5,331.5 799.5,331.5" fill="none" stroke="#761818" stroke-width="1.1" stroke-linejoin="miter" stroke-linecap="square"/>
<polyline points="836.5,331.5 848.5,331.5" fill="none" stroke="#761818" stroke-width="1.1" stroke-linejoin="miter" stroke-linecap="square"/>
<rect x="799.5" y="326.5" width="37.00" height="10.00" fill="#c9c9ab" stroke="#5a0e0e" stroke-width="1.1"/>
<rect x="784.25" y="321.85" width="5.5" height="5.5" fill="#3a3af0"/>
<text class="big" transform="translate(799.3 321.9) scale(0.96 1.12)" font-size="14.4" text-anchor="start" dominant-baseline="alphabetic">R5</text>
<text transform="translate(799.3 344.7) scale(1 1.03)" font-size="9.8" text-anchor="start" dominant-baseline="central">470</text>
<polyline points="787.5,393.5 799.5,393.5" fill="none" stroke="#761818" stroke-width="1.1" stroke-linejoin="miter" stroke-linecap="square"/>
<polyline points="836.5,393.5 848.5,393.5" fill="none" stroke="#761818" stroke-width="1.1" stroke-linejoin="miter" stroke-linecap="square"/>
<rect x="799.5" y="388.5" width="37.00" height="10.00" fill="#c9c9ab" stroke="#5a0e0e" stroke-width="1.1"/>
<rect x="784.25" y="384.05" width="5.5" height="5.5" fill="#3a3af0"/>
<text class="big" transform="translate(799.3 384.09999999999997) scale(0.96 1.12)" font-size="14.4" text-anchor="start" dominant-baseline="alphabetic">R6</text>
<text transform="translate(799.3 406.9) scale(1 1.03)" font-size="9.8" text-anchor="start" dominant-baseline="central">470</text>
<polyline points="787.5,454.5 799.5,454.5" fill="none" stroke="#761818" stroke-width="1.1" stroke-linejoin="miter" stroke-linecap="square"/>
<polyline points="836.5,454.5 848.5,454.5" fill="none" stroke="#761818" stroke-width="1.1" stroke-linejoin="miter" stroke-linecap="square"/>
<rect x="799.5" y="449.5" width="37.00" height="10.00" fill="#c9c9ab" stroke="#5a0e0e" stroke-width="1.1"/>
<rect x="784.25" y="445.05" width="5.5" height="5.5" fill="#3a3af0"/>
<text class="big" transform="translate(799.3 445.09999999999997) scale(0.96 1.12)" font-size="14.4" text-anchor="start" dominant-baseline="alphabetic">R7</text>
<text transform="translate(799.3 467.9) scale(1 1.03)" font-size="9.8" text-anchor="start" dominant-baseline="central">470</text>
<polyline points="787.5,516.5 799.5,516.5" fill="none" stroke="#761818" stroke-width="1.1" stroke-linejoin="miter" stroke-linecap="square"/>
<polyline points="836.5,516.5 848.5,516.5" fill="none" stroke="#761818" stroke-width="1.1" stroke-linejoin="miter" stroke-linecap="square"/>
<rect x="799.5" y="511.5" width="37.00" height="10.00" fill="#c9c9ab" stroke="#5a0e0e" stroke-width="1.1"/>
<rect x="784.25" y="507.05" width="5.5" height="5.5" fill="#3a3af0"/>
<text class="big" transform="translate(799.3 507.09999999999997) scale(0.96 1.12)" font-size="14.4" text-anchor="start" dominant-baseline="alphabetic">R8</text>
<text transform="translate(799.3 529.9) scale(1 1.03)" font-size="9.8" text-anchor="start" dominant-baseline="central">470</text>
<polyline points="971.5,259.5 984.5,259.5" fill="none" stroke="#761818" stroke-width="1.1" stroke-linejoin="miter" stroke-linecap="square"/>
<polyline points="971.5,271.5 984.5,271.5" fill="none" stroke="#761818" stroke-width="1.1" stroke-linejoin="miter" stroke-linecap="square"/>
<polyline points="971.5,283.5 984.5,283.5" fill="none" stroke="#761818" stroke-width="1.1" stroke-linejoin="miter" stroke-linecap="square"/>
<polyline points="971.5,295.5 984.5,295.5" fill="none" stroke="#761818" stroke-width="1.1" stroke-linejoin="miter" stroke-linecap="square"/>
<polyline points="971.5,308.5 984.5,308.5" fill="none" stroke="#761818" stroke-width="1.1" stroke-linejoin="miter" stroke-linecap="square"/>
<polyline points="971.5,320.5 984.5,320.5" fill="none" stroke="#761818" stroke-width="1.1" stroke-linejoin="miter" stroke-linecap="square"/>
<polyline points="971.5,331.5 984.5,331.5" fill="none" stroke="#761818" stroke-width="1.1" stroke-linejoin="miter" stroke-linecap="square"/>
<polyline points="1057.5,362.5 1057.5,375.5" fill="none" stroke="#761818" stroke-width="1.1" stroke-linejoin="miter" stroke-linecap="square"/>
<rect x="984.5" y="246.5" width="80.00" height="116.00" fill="#480000" stroke="#480000" stroke-width="0.5"/>
<polygon points="999,344 1003.7,339.9 1040.5,339.9 1044.9,344.8 1040.5,349.6 1003,349.6" fill="#0d560d"/>
<polygon points="997.9,341 998.9,308 1002.7,304.2 1007,308 1006.2,339.4 1001.8,343" fill="#0d560d"/>
<polygon points="999.3,298.4 1000.4,267.4 1004.7,263.2 1008.5,267.4 1007,298.4 1002.7,302.2" fill="#0d560d"/>
<polygon points="1002.7,302.6 1007,298.7 1041.4,298.7 1045.7,303.2 1041.4,307.6 1007,307.6" fill="#0d560d"/>
<polygon points="1005.6,262.6 1008.5,258.7 1042.4,258.7 1046.3,262.6 1043,266.4 1008.5,266.4" fill="#26f226"/>
<polygon points="1046.8,263.5 1050.7,267.4 1049.2,298.4 1045.7,302.6 1041.4,298.4 1043,267.4" fill="#26f226"/>
<polygon points="1045.7,304.5 1049.5,307.6 1048.8,339.9 1044.9,344.8 1040.5,339.9 1041.4,307.6" fill="#26f226"/>
<rect x="1048.25" y="371.15" width="5.5" height="5.5" fill="#3a3af0"/>
<circle cx="528.5" cy="344.5" r="4.3" fill="none" stroke="#2a2aa0" stroke-width="1.1"/>
<line x1="522" y1="344.5" x2="535" y2="344.5" stroke="#2a2aa0" stroke-width="1.1"/>
<line x1="528.5" y1="338" x2="528.5" y2="351" stroke="#2a2aa0" stroke-width="1.1"/>
<text transform="translate(427.8 419.3) scale(1 1.03)" font-size="9.8" text-anchor="end" dominant-baseline="central">GND</text>
</svg></body></html>
